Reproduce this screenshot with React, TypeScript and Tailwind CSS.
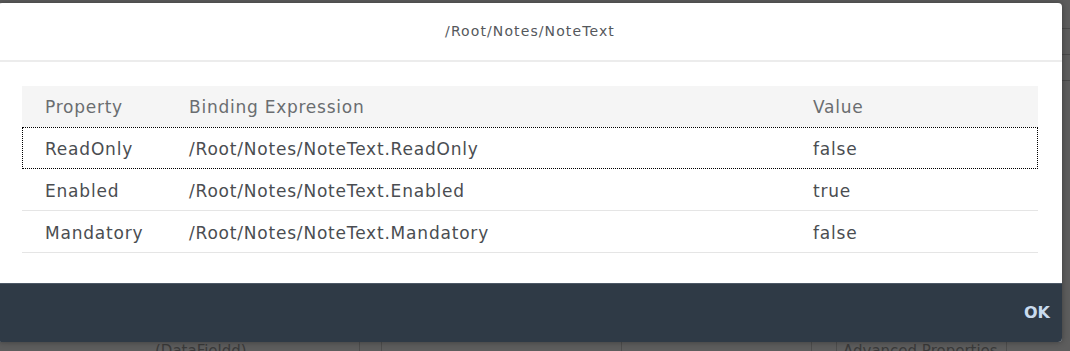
const ROWS = [
  { prop: "ReadOnly", expr: "/Root/Notes/NoteText.ReadOnly", value: "false", focused: true },
  { prop: "Enabled", expr: "/Root/Notes/NoteText.Enabled", value: "true", focused: false },
  { prop: "Mandatory", expr: "/Root/Notes/NoteText.Mandatory", value: "false", focused: false },
];

const font = { fontFamily: '"DejaVu Sans", "Noto Sans", sans-serif' };

export default function App() {
  return (
    <div className="relative w-[1070px] h-[351px] overflow-hidden bg-[#5d5d5d]" style={font}>
      {/* page behind the dialog */}
      <div className="absolute left-0 right-0 top-[342px] h-[9px] flex text-[15px] leading-[18px] text-[#3a3a3a]">
        <div className="w-[150px]" />
        <div className="w-[210px] border-r border-[#4d4d4d] pl-[5px]">(DataFieldd)</div>
        <div className="w-[22px] border-r border-[#4d4d4d]" />
        <div className="w-[240px] border-r border-[#4d4d4d]" />
        <div className="w-[190px] border-r border-[#4d4d4d]" />
        <div className="w-[25px] border-r border-[#4d4d4d]" />
        <div className="w-[170px] border-r border-[#4d4d4d] pl-[6px]">Advanced Properties</div>
        <div className="flex-1" />
      </div>
      <div className="absolute right-0 top-0 w-[8px] h-full flex flex-col">
        <div className="h-[29px] border-b border-[#4a4a4a]" />
        <div className="h-[26px] border-b border-[#4a4a4a]" />
        <div className="h-[26px] border-b border-[#4a4a4a]" />
      </div>

      {/* dialog */}
      <div className="absolute left-[-2px] top-[3px] w-[1064px] h-[339px] bg-white rounded-[4px] overflow-hidden flex flex-col shadow-[0_0_6px_rgba(0,0,0,0.35)]">
        <div className="h-[59px] shrink-0 flex items-center justify-center border-b-2 border-[#ececec] text-[14px] tracking-[1.1px] text-[#55585c]">
          /Root/Notes/NoteText
        </div>
        <div className="flex-1 px-[24px] pt-[24px]">
          <div className="flex h-[41px] items-center pt-[3px] bg-[#f5f5f5] text-[17px] tracking-[0.75px] text-[#6a6d70]">
            <div className="w-[144px] pl-[23px]">Property</div>
            <div className="w-[624px] pl-[23px]">Binding Expression</div>
            <div className="flex-1 pl-[23px]">Value</div>
          </div>
          {ROWS.map((r) => (
            <div
              key={r.prop}
              className={
                r.focused
                  ? "flex h-[42px] items-center pt-[4px] text-[17px] tracking-[0.8px] text-[#4a4d51] border border-dotted border-black"
                  : "flex h-[42px] items-center pt-[4px] text-[17px] tracking-[0.8px] text-[#4a4d51] border-b border-[#e5e5e5]"
              }
            >
              <div className={r.focused ? "w-[143px] pl-[22px]" : "w-[144px] pl-[23px]"}>{r.prop}</div>
              <div className="w-[624px] pl-[23px]">{r.expr}</div>
              <div className="flex-1 pl-[23px]">{r.value}</div>
            </div>
          ))}
        </div>
        <div className="h-[59px] shrink-0 bg-[#2f3a46] border-t border-[#4c5866] flex items-center justify-end pr-[12px]">
          <span className="text-[16px] font-bold text-[#c9dbee]">OK</span>
        </div>
      </div>
    </div>
  );
}
